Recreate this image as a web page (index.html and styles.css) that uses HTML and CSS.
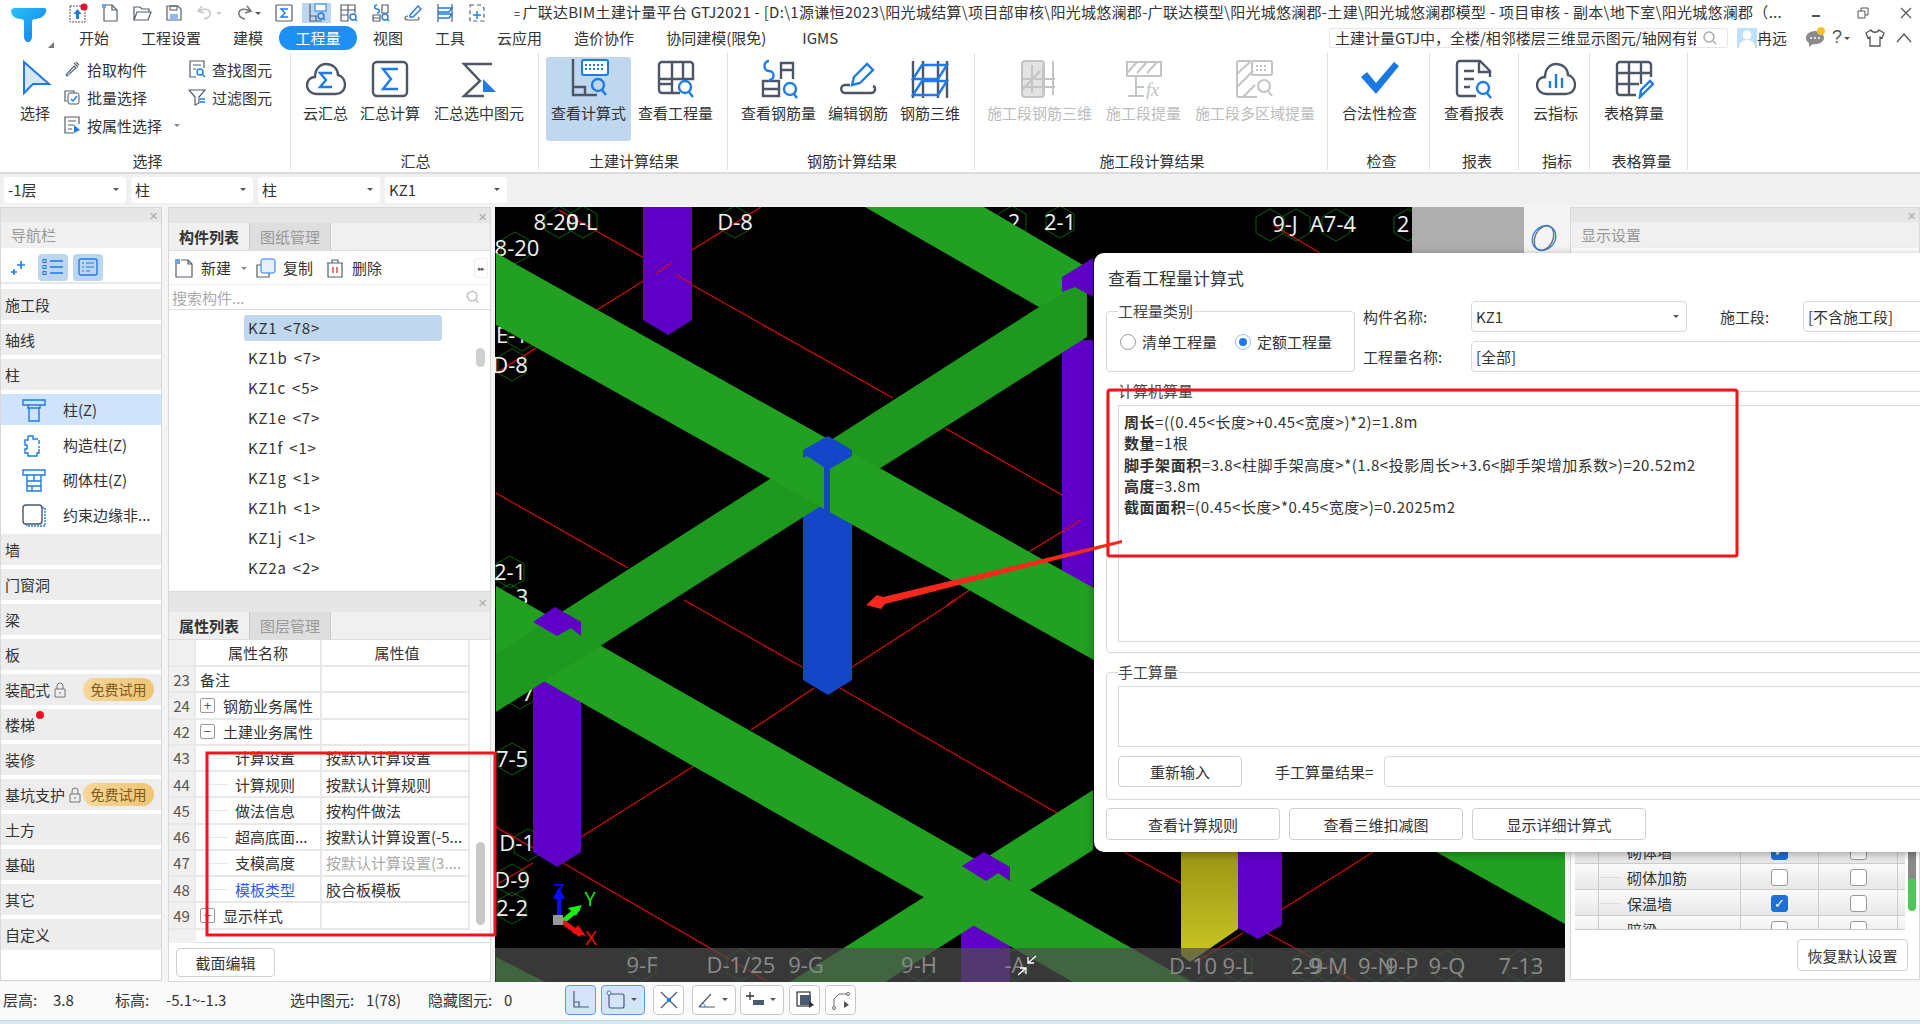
FILE: index.html
```html
<!DOCTYPE html>
<html lang="zh-CN">
<head>
<meta charset="utf-8">
<title>广联达BIM土建计量平台 GTJ2021</title>
<link rel="stylesheet" href="styles.css">
</head>
<body>
<header class="top">
  <div class="logo-col">
    <svg class="logo" viewBox="0 0 40 40" width="40" height="40">
      <defs><linearGradient id="lg" x1="0" y1="0" x2="1" y2="1"><stop offset="0" stop-color="#27c4f5"/><stop offset="1" stop-color="#1478f0"/></linearGradient></defs>
      <path fill="url(#lg)" d="M2 6c0-2 2-3 4-3h29c2 0 3 2 2 4-2 5-7 7-11 7-2 0-3 1-3 3v14c0 4-2 6-4 6s-4-2-4-5V17c0-2-1-3-3-3C7 14 2 11 2 6z"/>
    </svg>
    <span class="logo-corner"></span>
  </div>
  <div class="top-main">
    <div class="title-row">
      <div class="qa">
        <span class="qi"><svg viewBox="0 0 20 20" width="20" height="20"><rect x="2" y="3" width="15" height="16" fill="none" stroke="#555" stroke-dasharray="2 1"/><path d="M9.5 6l-4 5h2.5v5h3v-5h2.5z" fill="#1e7be6"/><circle cx="16" cy="4" r="3.6" fill="#e8102a"/></svg></span>
        <span class="qi"><svg viewBox="0 0 20 20" width="20" height="20"><path class="sl1" d="M4 2h8l5 5v11H4z"/><path class="sl1" d="M12 2v5h5"/><rect x="2" y="1" width="4" height="4" fill="#6ea4ea"/></svg></span>
        <span class="qi"><svg viewBox="0 0 20 20" width="20" height="20"><path class="sl1" d="M2 17V4h6l2 2h7v3M2 17l3-8h14l-3 8z"/></svg></span>
        <span class="qi"><svg viewBox="0 0 20 20" width="20" height="20"><path class="sl1" d="M3 3h11l3 3v11H3z"/><rect x="6" y="11" width="8" height="6" fill="#8eb8ee"/><rect x="6" y="3" width="7" height="4" fill="none" stroke="#555"/></svg></span>
        <span class="qi qw"><svg viewBox="0 0 32 20" width="32" height="20"><path fill="none" stroke="#c8c8c8" stroke-width="1.6" d="M10 16c5-1 7-4 6-7s-6-4-11-1M8 3L4 8l6 2"/><path fill="#c8c8c8" d="M22 9h6l-3 3z"/></svg></span>
        <span class="qi qw"><svg viewBox="0 0 32 20" width="32" height="20"><path fill="none" stroke="#777" stroke-width="1.6" d="M12 16c-5-1-7-4-6-7s6-4 11-1M14 3l4 5-6 2"/><path fill="#555" d="M22 9h6l-3 3z"/></svg></span>
        <span class="qi"><svg viewBox="0 0 20 20" width="20" height="20"><rect x="2" y="2" width="16" height="16" rx="1" class="sl1"/><path class="bl1" d="M14 6H7l4 4-4 4h7"/></svg></span>
        <span class="qi qi-on"><svg viewBox="0 0 20 20" width="20" height="20"><path class="sl1" d="M3 1v17h12M3 13h6v5"/><rect x="8" y="1" width="11" height="7" fill="#fff" stroke="#1e7be6"/><circle cx="14" cy="13" r="3" class="bl1"/><path class="bl1" d="M16 15l2 2"/></svg></span>
        <span class="qi"><svg viewBox="0 0 20 20" width="20" height="20"><path class="sl1" d="M2 12V2h14v8M2 7h14M9 2v16M2 12h7v6H2z"/><circle cx="14" cy="14" r="3" class="bl1"/><path class="bl1" d="M16 16l2 2"/></svg></span>
        <span class="qi"><svg viewBox="0 0 20 20" width="20" height="20"><path class="sl1" d="M11 2h6v8h-6zM2 12h7v6H2zM2 15h7"/><path class="bl1" d="M6 2C3 2 3 6 6 6s3 4 0 4"/><circle cx="14" cy="14" r="3" class="bl1"/><path class="bl1" d="M16 16l2 2"/></svg></span>
        <span class="qi"><svg viewBox="0 0 20 20" width="20" height="20"><path class="bl1" d="M7 12L15 3l3 3-8 8-3 0z"/><path class="sl1" d="M5 13c-4 0-4 4 0 4h9c2 0 3-2 1-3"/></svg></span>
        <span class="qi"><svg viewBox="0 0 20 20" width="20" height="20"><path class="sl1" d="M3 1v18M17 1v18"/><path class="bl1" d="M3 5h14l-3 4H3M3 11h14l-3 4H3"/></svg></span>
        <span class="qi"><svg viewBox="0 0 20 20" width="20" height="20"><path class="sl1" d="M3 2h11l3 3v13H3z" stroke-dasharray="4 3"/><path class="bl1" d="M10 8v8M6 12h8"/></svg></span>
      </div>
      <div class="app-title"><span class="title-eq">=</span>广联达BIM土建计量平台 GTJ2021 - [D:\1源谦恒2023\阳光城结算\项目部审核\阳光城悠澜郡-广联达模型\阳光城悠澜郡-土建\阳光城悠澜郡模型 - 项目审核 - 副本\地下室\阳光城悠澜郡（...</div>
      <div class="win">
        <svg class="win-min" viewBox="0 0 12 12" width="12" height="12"><path d="M2 9h8" stroke="#555" stroke-width="2"/></svg>
        <svg class="win-max" viewBox="0 0 12 12" width="12" height="12"><path d="M1 4h7v7H1zM4 4V1h7v7H8" fill="none" stroke="#555"/></svg>
        <svg class="win-close" viewBox="0 0 12 12" width="12" height="12"><path d="M1 1l10 10M11 1L1 11" stroke="#555" stroke-width="1.2"/></svg>
      </div>
    </div>
    <div class="tab-row">
      <nav class="tabs">
        <span class="tab">开始</span><span class="tab">工程设置</span><span class="tab">建模</span><span class="tab tab-on">工程量</span><span class="tab">视图</span><span class="tab">工具</span><span class="tab">云应用</span><span class="tab">造价协作</span><span class="tab">协同建模(限免)</span><span class="tab tab-last">IGMS</span>
      </nav>
      <div class="top-tools">
        <div class="topsearch"><span class="topsearch-text">土建计量GTJ中，全楼/相邻楼层三维显示图元/轴网有错</span>
          <svg viewBox="0 0 16 16" width="16" height="16"><circle cx="7" cy="7" r="5" fill="none" stroke="#aaa" stroke-width="1.5"/><path d="M11 11l3 3" stroke="#aaa" stroke-width="1.5"/></svg>
        </div>
        <svg class="avatar" viewBox="0 0 20 20" width="20" height="20"><rect width="20" height="20" fill="#bfe0fa"/><circle cx="10" cy="7" r="4.5" fill="#fff"/><path d="M2 20c0-6 4-8 8-8s8 2 8 8z" fill="#fff"/></svg>
        <span class="uname">冉远</span>
        <svg class="chat" viewBox="0 0 22 22" width="22" height="22"><path d="M11 4c-5 0-9 3-9 7 0 2 1 4 3 5v4l4-3c5 1 11-2 11-6 0-4-4-7-9-7z" fill="#8a8a8a"/><circle cx="7" cy="11" r="1" fill="#fff"/><circle cx="11" cy="11" r="1" fill="#fff"/><circle cx="15" cy="11" r="1" fill="#fff"/><circle cx="17" cy="4" r="4" fill="#f6c22c"/></svg>
        <span class="help">?</span><span class="help-arrow"></span>
        <svg class="shirt" viewBox="0 0 20 20" width="20" height="20"><path d="M6 2L1 5l2 5 2-1v9h10V9l2 1 2-5-5-3c-1 3-7 3-8 0z" fill="none" stroke="#555" stroke-width="1.3"/></svg>
        <svg class="chev" viewBox="0 0 18 12" width="18" height="12"><path d="M2 10l7-8 7 8" fill="none" stroke="#555" stroke-width="1.4"/></svg>
      </div>
    </div>
  </div>
</header>

<section class="ribbon">
  <div class="rg rg1">
    <div class="rg-body sel-body">
      <div class="rb rb-sel"><svg viewBox="0 0 40 40" width="40" height="40"><path d="M9 3l25 22H18L9 34z" fill="#d6e7fb" stroke="#1e7be6" stroke-width="2"/></svg><span>选择</span></div>
      <div class="sel-col sel-a">
        <div class="sm"><svg viewBox="0 0 18 18" width="18" height="18"><path class="sl1" d="M3 15l8-9 2 2-9 8zM11 3l4 4"/><path class="sl1" d="M13 2l3 3"/><path d="M2 16l4-4 1 2z" fill="#8db6ea"/></svg><span>拾取构件</span></div>
        <div class="sm"><svg viewBox="0 0 18 18" width="18" height="18"><path class="sl1" d="M4 13H2V3h9v2"/><rect x="5" y="5" width="11" height="11" rx="2" fill="none" stroke="#4d5666"/><path class="bl1" d="M8 11l2 2 4-5"/></svg><span>批量选择</span></div>
        <div class="sm"><svg viewBox="0 0 18 18" width="18" height="18"><path class="sl1" d="M16 8V1H2v16h9M5 5h8M5 9h6M5 13h4"/><path class="bf" d="M11 9l6 5-6 3z"/></svg><span>按属性选择</span><i class="caret"></i></div>
      </div>
      <div class="sel-col sel-b">
        <div class="sm"><svg viewBox="0 0 18 18" width="18" height="18"><path class="sl1" d="M16 8V1H2v16h6M5 5h8M5 9h3"/><circle cx="12" cy="12" r="3" class="bl1"/><path class="bl1" d="M14 14l3 3"/></svg><span>查找图元</span></div>
        <div class="sm"><svg viewBox="0 0 18 18" width="18" height="18"><path class="sl1" d="M1 2h16l-6 7v6l-4 2V9z"/><path class="bl1" d="M12 11h5M12 14h5"/></svg><span>过滤图元</span></div>
      </div>
    </div>
    <div class="rg-label">选择</div>
  </div>
  <div class="rg rg2">
    <div class="rg-body">
      <div class="rb"><svg viewBox="0 0 40 40" width="40" height="40"><path class="sl" d="M11 35C4 35 1 30 1 26c0-5 4-8 8-8C9 10 14 5 20 5c7 0 12 5 12 11 4 1 7 5 7 10 0 5-4 9-9 9z"/><path class="bl" d="M26 14H14l6 7-6 7h12"/></svg><span>云汇总</span></div>
      <div class="rb"><svg viewBox="0 0 40 40" width="40" height="40"><rect x="3" y="3" width="34" height="34" rx="4" class="sl"/><path class="bl" d="M28 10H13l8 10-8 10h15"/></svg><span>汇总计算</span></div>
      <div class="rb rb-wide"><svg viewBox="0 0 40 40" width="40" height="40"><path class="sl" d="M33 5H5l16 17L5 37h20"/><path class="bf" d="M24 20l13 13H24z"/></svg><span>汇总选中图元</span></div>
    </div>
    <div class="rg-label">汇总</div>
  </div>
  <div class="rg rg3">
    <div class="rg-body">
      <div class="rb rb-on"><svg viewBox="0 0 40 40" width="40" height="40"><path class="sl" d="M4 0v36h24M4 28h12v8"/><rect x="13" y="1" width="26" height="15" rx="2" fill="#fff" stroke="#1e7be6" stroke-width="2"/><path d="M16 6h20M16 10h20" stroke="#1e7be6" stroke-width="2" stroke-dasharray="2 2"/><circle cx="29" cy="26" r="6" class="bl"/><path class="bl" d="M33 31l4 5"/></svg><span>查看计算式</span></div>
      <div class="rb"><svg viewBox="0 0 40 40" width="40" height="40"><path class="sl" d="M24 34H6a3 3 0 0 1-3-3V6a3 3 0 0 1 3-3h28a3 3 0 0 1 3 3v14H3M16 3v31M3 25h13M27 3v17"/><circle cx="29" cy="28" r="6" class="bl"/><path class="bl" d="M33 33l4 5"/></svg><span>查看工程量</span></div>
    </div>
    <div class="rg-label">土建计算结果</div>
  </div>
  <div class="rg rg4">
    <div class="rg-body">
      <div class="rb"><svg viewBox="0 0 40 40" width="40" height="40"><path class="sl" d="M22 20V4h12v16M22 11h12M4 37V22h16v15zM4 30h16"/><path class="bl" d="M10 2C4 2 4 12 10 12s6 9 0 9"/><circle cx="31" cy="30" r="6" class="bl"/><path class="bl" d="M35 35l3 4"/></svg><span>查看钢筋量</span></div>
      <div class="rb"><svg viewBox="0 0 40 40" width="40" height="40"><path class="bl" d="M14 26l2-8L29 5l6 6-13 13z"/><path class="sl" d="M12 26H7c-5 0-5 8 0 8h26c5 0 5-6 2-7"/></svg><span>编辑钢筋</span></div>
      <div class="rb"><svg viewBox="0 0 40 40" width="40" height="40"><path class="sl" d="M3 2v37M13 2v37M28 2v37M37 2v37"/><path class="bl" d="M3 20L12 6h25l-9 14zM3 36l9-14h25l-9 14z"/></svg><span>钢筋三维</span></div>
    </div>
    <div class="rg-label">钢筋计算结果</div>
  </div>
  <div class="rg rg5">
    <div class="rg-body">
      <div class="rb rb-off"><svg viewBox="0 0 40 40" width="40" height="40"><rect x="2" y="2" width="22" height="36" rx="3" fill="#e2e2e2" stroke="#c4c4c4" stroke-width="2"/><path class="gy" d="M3 30L20 12M12 6v28M23 6v28M33 2v34M3 20h32M3 28h32"/></svg><span>施工段钢筋三维</span></div>
      <div class="rb rb-off"><svg viewBox="0 0 40 40" width="40" height="40"><path class="gy" d="M3 3h34v14H3zM3 14L13 3M13 14L23 3M23 14L33 3M12 17v20M4 37h16M12 28h8"/><text x="22" y="37" class="fx">fx</text></svg><span>施工段提量</span></div>
      <div class="rb rb-off"><svg viewBox="0 0 40 40" width="40" height="40"><path class="gy" d="M16 2H4a2 2 0 0 0-2 2v32a2 2 0 0 0 2 2h18M2 15L15 3M2 28l16-16M8 38l12-12"/><rect x="17" y="2" width="20" height="14" rx="1" class="gy"/><path d="M21 7h12M21 11h12" stroke="#c4c4c4" stroke-width="2" stroke-dasharray="2 2"/><circle cx="29" cy="27" r="6" class="gy"/><path class="gy" d="M33 32l4 5"/></svg><span>施工段多区域提量</span></div>
    </div>
    <div class="rg-label">施工段计算结果</div>
  </div>
  <div class="rg rg6">
    <div class="rg-body">
      <div class="rb"><svg viewBox="0 0 40 40" width="40" height="40"><path d="M1 18l6-5 9 11L34 3l5 4-23 28z" fill="#1a78e2"/></svg><span>合法性检查</span></div>
    </div>
    <div class="rg-label">检查</div>
  </div>
  <div class="rg rg7">
    <div class="rg-body">
      <div class="rb"><svg viewBox="0 0 40 40" width="40" height="40"><path class="sl" d="M22 37H6a3 3 0 0 1-3-3V5a3 3 0 0 1 3-3h20l10 10v6M25 2v11h11M10 12h10M10 20h10M10 28h6"/><circle cx="29" cy="29" r="6" class="bl"/><path class="bl" d="M33 34l4 5"/></svg><span>查看报表</span></div>
    </div>
    <div class="rg-label">报表</div>
  </div>
  <div class="rg rg8">
    <div class="rg-body">
      <div class="rb"><svg viewBox="0 0 40 40" width="40" height="40"><path class="sl" d="M11 35C4 35 1 30 1 26c0-5 4-8 8-8C9 10 14 5 20 5c7 0 12 5 12 11 4 1 7 5 7 10 0 5-4 9-9 9z"/><path class="bl" d="M14 29V22M20 29V15M26 29V19"/></svg><span>云指标</span></div>
    </div>
    <div class="rg-label">指标</div>
  </div>
  <div class="rg rg9">
    <div class="rg-body">
      <div class="rb"><svg viewBox="0 0 40 40" width="40" height="40"><path class="sl" d="M22 36H6a3 3 0 0 1-3-3V6a3 3 0 0 1 3-3h28a3 3 0 0 1 3 3v12M3 14h34M3 25h22M15 3v33M27 3v22"/><path class="bl" d="M26 38l1-7 9-9 3 3-9 9z"/></svg><span>表格算量</span></div>
    </div>
    <div class="rg-label">表格算量</div>
  </div>
</section>

<section class="selectors">
  <div class="dd">-1层<i class="caret-d"></i></div>
  <div class="dd">柱<i class="caret-d"></i></div>
  <div class="dd">柱<i class="caret-d"></i></div>
  <div class="dd">KZ1<i class="caret-d"></i></div>
</section>

<main class="main">
  <aside class="nav panel">
    <div class="strip"><span class="x">×</span></div>
    <div class="panel-head">导航栏</div>
    <div class="nav-tools">
      <svg class="nt-spark" viewBox="0 0 18 18" width="18" height="18"><path d="M12 3v8M8 7h8M5 11v6M2 14h6" stroke="#1e7be6" stroke-width="1.6"/></svg>
      <span class="nt nt-on"><svg viewBox="0 0 22 18" width="22" height="18"><path d="M8 3h13M8 9h13M8 15h13" stroke="#1e7be6" stroke-width="1.4"/><rect x="1" y="1.500" width="3" height="3" fill="none" stroke="#1e7be6"/><rect x="1" y="7.500" width="3" height="3" fill="none" stroke="#1e7be6"/><rect x="1" y="13.500" width="3" height="3" fill="none" stroke="#1e7be6"/></svg></span>
      <span class="nt nt-on"><svg viewBox="0 0 20 18" width="20" height="18"><rect x="1" y="1" width="18" height="16" rx="2" fill="none" stroke="#1e7be6" stroke-width="1.4"/><path d="M4 5h2M8 5h8M4 9h2M8 9h8M4 13h2M8 13h4" stroke="#1e7be6"/></svg></span>
    </div>
    <ul class="nav-list">
      <li class="ni">施工段</li>
      <li class="ni">轴线</li>
      <li class="ni">柱</li>
      <li class="si si-on"><svg viewBox="0 0 24 24" width="24" height="24"><path class="bl1" d="M1 2h22v5H1zM6 7h12v3H6zM7 10h10v13H7z"/></svg><span>柱(Z)</span></li>
      <li class="si"><svg viewBox="0 0 24 24" width="24" height="24"><path class="bl1" d="M6 3h5v3h5M6 3v4H3v5h2v4H3v4h3v3h9v-3h2v-4M17 7v4M17 13v2"/></svg><span>构造柱(Z)</span></li>
      <li class="si"><svg viewBox="0 0 24 24" width="24" height="24"><path class="bl1" d="M1 2h22v5H1zM5 7h14v16H5zM5 13h14M5 18h14M12 7v6M10 18v5"/></svg><span>砌体柱(Z)</span></li>
      <li class="si si-last"><svg viewBox="0 0 24 24" width="24" height="24"><rect x="1" y="2" width="19" height="19" rx="3" fill="none" stroke="#4d5666" stroke-width="1.4"/><path class="bl1" d="M20 5h3v18H5v-2" stroke-dasharray="2 1"/></svg><span>约束边缘非...</span></li>
      <li class="ni">墙</li>
      <li class="ni">门窗洞</li>
      <li class="ni">梁</li>
      <li class="ni">板</li>
      <li class="ni ni-lock"><span>装配式</span><svg class="lock" viewBox="0 0 14 16" width="14" height="16"><path d="M2 7h10v8H2zM4 7V4a3 3 0 0 1 6 0v3M7 10v2" fill="none" stroke="#777"/></svg><b class="free">免费试用</b></li>
      <li class="ni">楼梯<i class="dot"></i></li>
      <li class="ni">装修</li>
      <li class="ni ni-lock"><span>基坑支护</span><svg class="lock" viewBox="0 0 14 16" width="14" height="16"><path d="M2 7h10v8H2zM4 7V4a3 3 0 0 1 6 0v3M7 10v2" fill="none" stroke="#777"/></svg><b class="free free-near">免费试用</b></li>
      <li class="ni">土方</li>
      <li class="ni">基础</li>
      <li class="ni">其它</li>
      <li class="ni">自定义</li>
    </ul>
  </aside>

  <div class="mid">
    <section class="panel cl">
      <div class="strip"><span class="x">×</span></div>
      <div class="ptabs"><span class="ptab ptab-on">构件列表</span><span class="ptab">图纸管理</span></div>
      <div class="cl-tools">
        <span class="ct"><svg viewBox="0 0 20 20" width="20" height="20"><path class="sl1" d="M2 4v15h16V6l-4-4H7M14 2v4h4"/><rect x="1" y="1" width="5" height="5" fill="#6ea4ea"/></svg>新建<i class="caret"></i></span>
        <span class="ct"><svg viewBox="0 0 20 20" width="20" height="20"><path class="sl1" d="M5 7H1v12h12v-4"/><rect x="5" y="1" width="14" height="14" rx="2" fill="#e6f0fc" stroke="#1e7be6"/></svg>复制</span>
        <span class="ct"><svg viewBox="0 0 20 20" width="20" height="20"><path class="sl1" d="M2 5h16M7 5V2h6v3M3 5v14h14V5"/><path d="M8 9v6M12 9v6" stroke="#e02020" stroke-width="1.2"/></svg>删除</span>
        <span class="ct-more">▸▸</span>
      </div>
      <div class="cl-search"><span>搜索构件...</span><svg viewBox="0 0 16 16" width="14" height="14"><circle cx="7" cy="7" r="5.500" fill="none" stroke="#bbb" stroke-width="1.500"/><path d="M11 11l3 3" stroke="#bbb" stroke-width="1.500"/></svg></div>
      <ul class="cl-list">
        <li class="kz kz-on">KZ1 &lt;78&gt;</li>
        <li class="kz">KZ1b &lt;7&gt;</li>
        <li class="kz">KZ1c &lt;5&gt;</li>
        <li class="kz">KZ1e &lt;7&gt;</li>
        <li class="kz">KZ1f &lt;1&gt;</li>
        <li class="kz">KZ1g &lt;1&gt;</li>
        <li class="kz">KZ1h &lt;1&gt;</li>
        <li class="kz">KZ1j &lt;1&gt;</li>
        <li class="kz">KZ2a &lt;2&gt;</li>
        <span class="sb sb-kz"></span>
      </ul>
    </section>
    <section class="panel pl">
      <div class="strip strip-tall"><span class="x">×</span></div>
      <div class="ptabs"><span class="ptab ptab-on">属性列表</span><span class="ptab">图层管理</span></div>
      <div class="ptable">
        <div class="pr pr-h"><span class="n"></span><span class="pn pn-c">属性名称</span><span class="pv pn-c">属性值</span></div>
        <div class="pr"><span class="n">23</span><span class="pn">备注</span><span class="pv"></span></div>
        <div class="pr"><span class="n">24</span><span class="pn"><i class="ex">+</i>钢筋业务属性</span><span class="pv"></span></div>
        <div class="pr"><span class="n">42</span><span class="pn"><i class="ex">−</i>土建业务属性</span><span class="pv"></span></div>
        <div class="pr"><span class="n">43</span><span class="pn pc">计算设置</span><span class="pv">按默认计算设置</span></div>
        <div class="pr"><span class="n">44</span><span class="pn pc">计算规则</span><span class="pv">按默认计算规则</span></div>
        <div class="pr"><span class="n">45</span><span class="pn pc">做法信息</span><span class="pv">按构件做法</span></div>
        <div class="pr"><span class="n">46</span><span class="pn pc">超高底面...</span><span class="pv">按默认计算设置(-5...</span></div>
        <div class="pr"><span class="n">47</span><span class="pn pc">支模高度</span><span class="pv pv-off">按默认计算设置(3....</span></div>
        <div class="pr"><span class="n">48</span><span class="pn pc pn-link">模板类型</span><span class="pv">胶合板模板</span></div>
        <div class="pr"><span class="n">49</span><span class="pn"><i class="ex">+</i>显示样式</span><span class="pv"></span></div>
        <div class="pr-end"><span class="n"></span></div>
        <span class="sb sb-pr"></span>
      </div>
      <div class="pl-foot"><button class="btn btn-sec">截面编辑</button></div>
    </section>
  </div>

  <div class="view">
    <svg class="scene" viewBox="495 207 1070 775" width="1070" height="775">
      <defs>
        <polygon id="hx" points="0,-16 14,-8 14,8 0,16 -14,8 -14,-8" fill="none" stroke="#0b5f0b" stroke-width="1"/>
        <linearGradient id="yl" x1="0" y1="0" x2="0" y2="1"><stop offset="0" stop-color="#9a9414"/><stop offset="1" stop-color="#ccc824"/></linearGradient>
      </defs>
      <rect x="495" y="207" width="1070" height="775" fill="#000"/>
      <g class="hexes">
        <use href="#hx" x="559" y="222"/><use href="#hx" x="583" y="222"/><use href="#hx" x="735" y="222"/><use href="#hx" x="1012" y="222"/><use href="#hx" x="1060" y="222"/>
        <use href="#hx" x="515" y="248"/><use href="#hx" x="522" y="335"/><use href="#hx" x="512" y="365"/><use href="#hx" x="510" y="572"/><use href="#hx" x="510" y="600"/>
        <use href="#hx" x="520" y="693"/><use href="#hx" x="512" y="759"/><use href="#hx" x="528" y="845"/><use href="#hx" x="512" y="880"/><use href="#hx" x="512" y="908"/>
        <use href="#hx" x="1270" y="225"/><use href="#hx" x="1296" y="225"/><use href="#hx" x="1336" y="225"/><use href="#hx" x="1408" y="225"/>
        <use href="#hx" x="642" y="965"/><use href="#hx" x="741" y="965"/><use href="#hx" x="806" y="965"/><use href="#hx" x="919" y="965"/><use href="#hx" x="1015" y="965"/>
        <use href="#hx" x="1193" y="966"/><use href="#hx" x="1238" y="966"/><use href="#hx" x="1307" y="966"/><use href="#hx" x="1328" y="966"/><use href="#hx" x="1376" y="966"/><use href="#hx" x="1402" y="966"/><use href="#hx" x="1447" y="966"/><use href="#hx" x="1521" y="966"/>
      </g>
      <g class="redl">
        <path d="M559 210L893 398M945 428L1062 495"/>
        <path d="M761 207L692 250M656 273L496 373"/>
        <path d="M496 493L628 568M684 600L804 668M840 688L1057 813"/>
        <path d="M1081 520L1027 553M956 600L852 667M814 688L751 730M694 766L581 837M533 863L496 885"/>
        <path d="M496 827L533 848M563 863L767 981"/>
        <path d="M1124 852L1181 883M1373 852L1281 910M1267 933L1355 981M1243 933L1196 962M1273 225L1320 253"/>
        <path d="M947 605L1000 570"/>
      </g>
      <g class="lbl">
        <text x="556" y="230">8-20</text><text x="582" y="230">9-L</text><text x="735" y="230">D-8</text><text x="1014" y="230">2</text><text x="1060" y="230">2-1</text>
        <text x="517" y="256">8-20</text><text x="512" y="343">E-1</text><text x="510" y="373">D-8</text><text x="510" y="580">2-1</text><text x="522" y="605">3</text><text x="528" y="701">7</text>
        <text x="512" y="767">7-5</text><text x="520" y="851">D-1,</text><text x="512" y="888">D-9</text><text x="512" y="916">2-2</text>
        <text x="1285" y="232">9-J</text><text x="1333" y="232">A7-4</text><text x="1403" y="232">2</text>
      </g>
      <path class="pu" d="M643 207H692V320L668 335L643 320Z"/>
      <path class="redl" d="M676 275L692 284M656 273L672 263"/>
      <path class="pu" d="M1062 340H1093V590H1062Z"/>
      <path class="redl" d="M1081 520L1062 532"/>
      <path class="pu" d="M533 640H581V852L557 867L533 852Z"/>
      <path class="pu" d="M961 900H1010V982H961Z"/>
      <path class="bu" d="M803 490H852V680L828 695L803 680Z"/>
      <path fill="url(#yl)" d="M1181 850H1238V929L1190 962L1181 955Z"/>
      <path class="pu" d="M1238 850H1282V925L1258 939L1238 928Z"/>
      <path class="gr" d="M1093 790L790 982H885L1093 850Z"/>
      <path class="gr" d="M496 586L1191 982H1073L496 654Z"/>
      <path class="gr" d="M496 957L545 982H496Z"/>
      <path class="gr" d="M865 207H984L1088 268V290L1039 307Z"/>
      <path class="gr2" d="M496 654L1039 307L1075 287L1087 293V337L496 712Z"/>
      <path class="gr" d="M496 253L1565 852V924L496 325Z"/>
      <path class="bu" d="M824 455H830V513H824Z"/>
      <path class="bu" d="M828 436L803 450V458L807 456L828 470L852 456V450Z"/>
      <path class="pu" d="M1093 258L1062 277V292L1075 287L1093 297Z"/>
      <path class="pu" d="M555 607L533 622L557 636L571 628L581 636V622Z"/>
      <path class="pu" d="M984 852L962 866L986 881L998 873L1010 881V867Z"/>
      <g class="gizmo">
        <path d="M559 890v30" stroke="#0a0aff" stroke-width="4"/><path d="M559 887l-6 12h12z" fill="#0a0aff"/>
        <text x="559" y="898" class="ax ax-z">Z</text>
        <path d="M562 922l17-14" stroke="#18ee18" stroke-width="5"/><path d="M582 905l-14 3 8 8z" fill="#18ee18"/>
        <text x="590" y="906" class="ax ax-y">Y</text>
        <path d="M563 922l18 13" stroke="#ee1010" stroke-width="5"/><path d="M586 936l-14-3 6-8z" fill="#ee1010"/>
        <text x="591" y="945" class="ax ax-x">X</text>
        <rect x="553" y="915" width="10" height="10" fill="#999"/>
      </g>
      <rect class="strip3d" x="495" y="948" width="1070" height="34"/>
      <g class="lbl lbl-dim">
        <text x="642" y="973">9-F</text><text x="741" y="973">D-1/25</text><text x="806" y="973">9-G</text><text x="919" y="973">9-H</text><text x="1015" y="973">-A</text>
        <text x="1193" y="974">D-10</text><text x="1238" y="974">9-L</text><text x="1307" y="974">2-9</text><text x="1328" y="974">9-M</text><text x="1376" y="974">9-N</text><text x="1402" y="974">9-P</text><text x="1447" y="974">9-Q</text><text x="1521" y="974">7-13</text>
      </g>
      <path d="M1036 956l-8 7M1028 957v6h6M1018 975l8-7M1026 974v-6h-6" fill="none" stroke="#fff" stroke-width="1.300"/>
      <rect x="1412" y="207" width="112" height="46" fill="#aeaeae"/>
      <rect x="1524" y="207" width="41" height="46" fill="#f4f4f4"/>
      <ellipse cx="1544" cy="238" rx="9" ry="13" fill="none" stroke="#777" stroke-width="1.600" transform="rotate(25 1544 238)"/>
      <ellipse cx="1544" cy="238" rx="11" ry="13" fill="none" stroke="#2a7ae2" stroke-width="1.200" transform="rotate(40 1544 238)"/>
    </svg>
  </div>

  <aside class="panel rp">
    <div class="strip"><span class="x">×</span></div>
    <div class="panel-head">显示设置</div>
    <div class="rp-body">
      <div class="rt">
        <div class="rr"><span></span><span class="rn">砌体墙</span><span class="rc"><i class="cb cb-on"></i></span><span class="rc"><i class="cb"></i></span></div>
        <div class="rr"><span></span><span class="rn">砌体加筋</span><span class="rc"><i class="cb"></i></span><span class="rc"><i class="cb"></i></span></div>
        <div class="rr"><span></span><span class="rn">保温墙</span><span class="rc"><i class="cb cb-on"></i></span><span class="rc"><i class="cb"></i></span></div>
        <div class="rr"><span></span><span class="rn">暗梁</span><span class="rc"><i class="cb"></i></span><span class="rc"><i class="cb"></i></span></div>
      </div>
      <span class="rsb"></span>
      <div class="rp-foot"><button class="btn btn-rs">恢复默认设置</button></div>
    </div>
  </aside>

  <section class="dlg">
    <div class="dlg-inner">
      <h2 class="dlg-title">查看工程量计算式</h2>
      <div class="dlg-top">
        <fieldset class="fs fs-type">
          <legend>工程量类别</legend>
          <div class="radios">
            <label class="rad"><i class="ro"></i>清单工程量</label>
            <label class="rad"><i class="ro ro-on"></i>定额工程量</label>
          </div>
        </fieldset>
        <div class="form">
          <span class="fl">构件名称:</span><div class="field f-name">KZ1<i class="caret-d"></i></div>
          <span class="fl fl-seg">施工段:</span><div class="field f-seg">[不含施工段]</div>
          <span class="fl">工程量名称:</span><div class="field f-all">[全部]</div>
        </div>
      </div>
      <fieldset class="fs fs-calc">
        <legend>计算机算量</legend>
        <div class="ta ta-calc">
          <p><b>周长</b>=((0.45&lt;长度&gt;+0.45&lt;宽度&gt;)*2)=1.8m</p>
          <p><b>数量</b>=1根</p>
          <p><b>脚手架面积</b>=3.8&lt;柱脚手架高度&gt;*(1.8&lt;投影周长&gt;+3.6&lt;脚手架增加系数&gt;)=20.52m2</p>
          <p><b>高度</b>=3.8m</p>
          <p><b>截面面积</b>=(0.45&lt;长度&gt;*0.45&lt;宽度&gt;)=0.2025m2</p>
        </div>
      </fieldset>
      <fieldset class="fs fs-man">
        <legend>手工算量</legend>
        <div class="ta ta-man"></div>
        <div class="man-row">
          <button class="btn btn-re">重新输入</button>
          <span class="man-l">手工算量结果=</span>
          <div class="field f-res"></div>
        </div>
      </fieldset>
      <div class="dlg-btns">
        <button class="btn btn-d">查看计算规则</button>
        <button class="btn btn-d">查看三维扣减图</button>
        <button class="btn btn-d">显示详细计算式</button>
      </div>
    </div>
  </section>
</main>

<footer class="status">
  <span class="st st-a">层高:</span><span class="st st-b">3.8</span>
  <span class="st st-c">标高:</span><span class="st st-d">-5.1~-1.3</span>
  <span class="st st-e">选中图元:</span><span class="st st-f">1(78)</span>
  <span class="st st-g">隐藏图元:</span><span class="st st-h">0</span>
  <div class="snap">
    <span class="sn sn-on"><svg viewBox="0 0 20 20" width="20" height="20"><path d="M3 1v16h15M3 12h5v5" fill="none" stroke="#4a5a70" stroke-width="1.200"/></svg></span>
    <span class="sn sn-on sn-w"><svg viewBox="0 0 20 20" width="20" height="20"><rect x="3" y="4" width="15" height="14" rx="2" fill="none" stroke="#4a5a70" stroke-width="1.200"/><circle cx="3" cy="3" r="2" fill="#fff" stroke="#1e7be6"/></svg><i class="caret-d"></i></span>
    <span class="sn"><svg viewBox="0 0 20 20" width="20" height="20"><path d="M2 2l16 16M18 2L2 18" stroke="#4a5a70" stroke-width="1.200"/><rect x="8" y="8" width="4" height="4" fill="#1e7be6"/></svg></span>
    <span class="sn sn-w"><svg viewBox="0 0 20 20" width="20" height="20"><path d="M2 17h16M2 17L14 4" fill="none" stroke="#4a5a70" stroke-width="1.200"/><path d="M8 17c0-2-1-3-2-4" fill="none" stroke="#1e7be6"/></svg><i class="caret-d"></i></span>
    <span class="sn sn-w"><svg viewBox="0 0 20 20" width="20" height="20"><path d="M5 2v8M1 6h8" stroke="#333" stroke-width="1.300"/><rect x="8" y="10" width="11" height="5" fill="#4a5a70"/></svg><i class="caret-d"></i></span>
    <span class="sn"><svg viewBox="0 0 20 20" width="20" height="20"><rect x="2" y="2" width="13" height="14" fill="none" stroke="#333" stroke-width="1.200"/><rect x="5" y="5" width="11" height="10" fill="#4a5a70"/><path d="M14 11l5 4-5 3z" fill="#333"/></svg></span>
    <span class="sn"><svg viewBox="0 0 20 20" width="20" height="20"><path d="M3 18V9l5-5h9" fill="none" stroke="#666"/><circle cx="3" cy="18" r="1.500" fill="#fff" stroke="#666"/><circle cx="17" cy="4" r="1.500" fill="#fff" stroke="#666"/><path d="M13 11l5 4-5 3z" fill="#555"/></svg></span>
  </div>
</footer>
<div class="base"></div>

<svg class="annot" viewBox="0 0 1920 1024" width="1920" height="1024">
  <rect x="1108" y="390" width="629" height="166" rx="2" class="annot-r"/>
  <rect x="207" y="753" width="288" height="182" class="annot-r"/>
  <path class="annot-a" d="M1122 540L883 597L877 595L866 605L881 609L885 604L1122 543Z"/>
</svg>
</body>
</html>
```

FILE: styles.css
```css
* { box-sizing: border-box; }
html, body { margin: 0; padding: 0; }
body {
  position: relative;
  width: 1920px; height: 1024px; overflow: hidden;
  background: #f4f4f4; color: #333;
  font-family: "Noto Sans CJK SC", "Noto Sans", sans-serif; font-size: 15px;
  display: flex; flex-direction: column;
}
ul { list-style: none; margin: 0; padding: 0; }
i { font-style: normal; }
p { margin: 0; }

.sl { fill: none; stroke: #4d5666; stroke-width: 2.4; }
.bl { fill: none; stroke: #1e7be6; stroke-width: 2.4; }
.bf { fill: #1e7be6; }
.gy { fill: none; stroke: #c4c4c4; stroke-width: 2; }
.fx { font: italic 18px "Liberation Serif", serif; fill: #c0c0c0; }
.sl1 { fill: none; stroke: #555d6b; stroke-width: 1.2; }
.bl1 { fill: none; stroke: #1e7be6; stroke-width: 1.4; }

/* top */
.top { display: flex; height: 50px; background: #fff; flex: none; }
.logo-col { width: 62px; position: relative; flex: none; padding: 5px 0 0 9px; }
.logo-corner { position: absolute; left: 48px; top: 42px; border: 3px solid transparent; border-right-color: #777; border-bottom-color: #777; }
.top-main { flex: 1; min-width: 0; }
.title-row { height: 25px; display: flex; align-items: center; }
.qa { display: flex; align-items: center; width: 452px; flex: none; }
.qi { width: 32px; height: 20px; display: flex; justify-content: center; }
.qw { width: 39px; justify-content: flex-start; padding-left: 4px; }
.qi-on { background: #bcd6f2; width: 29px; height: 20px; margin: 0 2px; }
.app-title { font-size: 15px; white-space: nowrap; color: #333; letter-spacing: .28px; padding-bottom: 2px; }
.title-eq { font-size: 11px; margin-right: 2px; }
.win { margin-left: auto; position: relative; width: 110px; height: 25px; display: flex; align-items: center; flex: none; }
.win-max { margin-left: 35px; }
.win-close { margin-left: 31px; }
.tab-row { height: 25px; display: flex; align-items: center; }
.tabs { display: flex; align-items: center; padding-left: 1px; }
.tab { padding: 0 16px; line-height: 24px; color: #333; white-space: nowrap; }
.tab-on { background: #1e90f5; color: #fff; border-radius: 12px; height: 24px; padding: 0 16.5px; }
.tab-last { margin-left: 4px; }
.top-tools { margin-left: auto; width: 591px; display: flex; align-items: center; flex: none; }
.topsearch { width: 399px; height: 20px; border: 1px solid #e6e6e6; border-radius: 2px; display: flex; align-items: center; padding-left: 5px; gap: 6px; }
.topsearch-text { width: 361px; overflow: hidden; white-space: nowrap; font-size: 15px; line-height: 20px; }
.avatar { margin-left: 9px; }
.uname { width: 30px; white-space: nowrap; }
.chat { margin-left: 17px; }
.help { margin-left: 6px; font-size: 18px; font-family: "Liberation Sans", sans-serif; color: #555; }
.help-arrow { width: 0; height: 0; border: 3px solid transparent; border-top-color: #555; margin: 4px 0 0 2px; }
.shirt { margin-left: 15px; }
.chev { margin-left: 10px; }

/* ribbon */
.ribbon { display: flex; height: 124px; background: #fff; padding-top: 3px; border-bottom: 2px solid #dcdcdc; flex: none; }
.rg { display: flex; flex-direction: column; height: 117px; border-right: 1px solid #e0e0e0; flex: none; }
.rg1 { width: 291px; } .rg2 { width: 248px; } .rg3 { width: 189px; } .rg4 { width: 247px; }
.rg5 { width: 353px; } .rg6 { width: 102px; } .rg7 { width: 89px; } .rg8 { width: 71px; } .rg9 { width: 98px; }
.rg-body { flex: 1; display: flex; gap: 2px; padding: 0 7px; }
.rg4 .rg-body { padding-left: 8px; }
.rg5 .rg-body { gap: 4px; }
.rg6 .rg-body, .rg7 .rg-body, .rg8 .rg-body, .rg9 .rg-body { padding-left: 9px; }
.rg-label { height: 19px; line-height: 19px; text-align: center; font-size: 15px; padding-left: 2px; }
.rg1 .rg-label { padding-left: 5px; }
.rg6 .rg-label, .rg7 .rg-label, .rg8 .rg-label, .rg9 .rg-label { padding-left: 6px; }
.rb { display: flex; flex-direction: column; align-items: center; padding: 6px 5px 0; height: 89px; white-space: nowrap; gap: 3px; border-radius: 3px; }
.rb span { line-height: 22px; }
.rb-on { background: #bfd7ef; height: 84px; margin-top: 4px; padding-top: 2px; }
.rb-wide { margin-left: 2px; }
.rb-off { color: #bcbcbc; }
.sel-body { padding: 0; gap: 0; position: relative; }
.rb-sel { width: 40px; margin-left: 15px; padding: 6px 0 0; flex: none; }
.sel-col { display: flex; flex-direction: column; padding-top: 2px; }
.sel-a { margin-left: 8px; width: 125px; }
.sm { display: flex; align-items: center; gap: 6px; height: 28px; white-space: nowrap; }
.caret { display: inline-block; width: 0; height: 0; border: 3.5px solid transparent; border-top-color: #888; margin: 4px 0 0 6px; }

/* selectors */
.selectors { height: 31px; background: #f0f0f0; display: flex; gap: 5px; padding: 3px 0 0 4px; flex: none; }
.dd { width: 122px; height: 26px; background: #fff; border-radius: 3px; padding-left: 4px; line-height: 26px; position: relative; }
.caret-d { position: absolute; right: 7px; top: 50%; margin-top: -2px; border: 3.5px solid transparent; border-top-color: #555; width: 0; height: 0; }

/* main */
.main { flex: 1; min-height: 0; position: relative; display: flex; padding-top: 2px; background: #f4f4f4; }
.panel { background: #fff; border: 1px solid #d8d8d8; display: flex; flex-direction: column; }
.strip { height: 14px; background: #e6e6e6; position: relative; flex: none; }
.strip-tall { height: 20px; }
.x { position: absolute; right: 3px; top: 50%; transform: translateY(-50%); color: #aaa; font: 15px/15px "Liberation Sans", sans-serif; }
.panel-head { height: 26px; background: #f0f0f0; color: #999; line-height: 25px; padding-left: 10px; flex: none; }

.nav { width: 162px; margin-bottom: 1px; }
.nav-tools { height: 36px; display: flex; align-items: center; padding: 4px 0 0 8px; border-bottom: 2px solid #e8e8e8; flex: none; }
.nt-spark { margin-right: 11px; }
.nt { width: 30px; height: 27px; border-radius: 4px; display: flex; align-items: center; justify-content: center; margin-right: 5px; }
.nt-on { background: #bcd6f2; }
.nav-list { padding-top: 5px; display: flex; flex-direction: column; }
.ni { height: 31px; margin-bottom: 4px; background: #ededed; line-height: 31px; padding-left: 4px; position: relative; display: flex; align-items: center; white-space: nowrap; }
.si { height: 35px; display: flex; align-items: center; padding-left: 21px; gap: 17px; white-space: nowrap; position: relative; }
.si-on { background: #cfe4fc; height: 31px; margin-bottom: 2px; }
.si-last { margin-bottom: 2px; }
.ni-lock { gap: 3px; }
.lock { flex: none; }
.free { position: absolute; left: 82px; top: 4px; width: 71px; height: 23px; border-radius: 12px; background: linear-gradient(90deg, #f6d69a, #efc572); color: #7d5a20; font-weight: 400; font-size: 14px; line-height: 23px; text-align: center; }
.dot { position: absolute; left: 35px; top: 2px; width: 8px; height: 8px; border-radius: 50%; background: #f01020; }

.mid { width: 323px; margin-left: 6px; display: flex; flex-direction: column; }
.cl { height: 385px; flex: none; }
.cl .strip { height: 15px; }
.pl { flex: 1; border-top: none; }
.ptabs { height: 28px; background: #f0f0f0; display: flex; border-bottom: 1px solid #ddd; flex: none; }
.ptab { width: 81px; text-align: center; line-height: 28px; color: #999; background: #dedede; border-right: 1px solid #ccc; }
.ptab-on { font-weight: 700; color: #333; background: #f0f0f0; }
.cl-tools { height: 34px; display: flex; align-items: center; padding-left: 5px; border-bottom: 1px solid #eee; position: relative; flex: none; }
.ct { display: flex; align-items: center; gap: 7px; margin-right: 6px; white-space: nowrap; }
.ct .caret { margin-left: 3px; }
.ct:nth-child(2) { margin-left: 3px; margin-right: 12px; }
.ct-more { margin-left: auto; margin-right: 2px; width: 14px; height: 20px; border: 1px solid #eee; border-radius: 3px; font-size: 7px; line-height: 18px; color: #555; text-align: center; letter-spacing: -1px; white-space: nowrap; }
.cl-search { height: 25px; display: flex; align-items: center; justify-content: space-between; padding: 0 10px 0 3px; color: #aaa; border-bottom: 1px solid #ddd; flex: none; }
.cl-list { flex: 1; position: relative; padding-top: 5px; min-height: 0; }
.kz { height: 26px; margin: 0 0 4px 75px; width: 198px; line-height: 26px; padding-left: 4px; font-size: 15px; letter-spacing: .8px; word-spacing: 2px; white-space: nowrap; border-radius: 3px; }
.kz-on { background: #bfd7ef; }
.sb { position: absolute; background: #c8c8c8; width: 9px; border-radius: 5px; right: 5px; }
.sb-kz { top: 38px; height: 19px; background: #d0d0d0; }
.sb-pr { top: 202px; height: 83px; }

.ptable { position: relative; height: 303px; border-bottom: 1px solid #ddd; flex: none; }
.pr { display: grid; grid-template-columns: 27px 126px 148px; height: 26.25px; border-bottom: 2px solid #e8e8e8; font-size: 15px; width: 301px; }
.pr-h { height: 27px; }
.pr > span { display: flex; align-items: center; white-space: nowrap; overflow: hidden; border-right: 2px solid #e8e8e8; }
.n { background: #f0f0f0; justify-content: center; color: #555; font-size: 15px; }
.pn { padding-left: 4px; }
.pn-c { justify-content: center; padding-left: 0; }
.pc { padding-left: 39px; position: relative; }
.pc::before { content: ""; position: absolute; left: 12px; top: 50%; width: 20px; border-top: 1px solid #e6e6e6; }
.pv { padding-left: 4px; }
.pv-off { color: #aaa; }
.pn-link { color: #2a5bf0; }
.ex { width: 15px; height: 15px; border: 1px solid #999; border-radius: 2px; display: inline-flex; align-items: center; justify-content: center; font: 13px/13px "Liberation Sans", sans-serif; margin: 0 8px 0 0; color: #555; flex: none; }
.pr-end { height: 13px; }
.pr-end .n { display: block; width: 27px; height: 13px; }
.pl-foot { padding: 5px 0 0 7px; }
.btn { font: inherit; color: #333; background: #fff; border: 1px solid #d0d0d0; border-radius: 4px; padding: 0; white-space: nowrap; }
.btn-sec { width: 99px; height: 29px; }

.view { width: 1070px; margin-left: 4px; position: relative; flex: none; height: 775px; overflow: hidden; }
.scene { display: block; }
.redl path, path.redl { fill: none; stroke: #d80a0a; stroke-width: 1.2; }
.pu { fill: #5f00c6; }
.bu { fill: #1446c8; }
.gr { fill: #21a021; }
.gr2 { fill: #1f9820; }
.lbl text { fill: #f0f0f0; font: 22px "Open Sans", "Liberation Sans", sans-serif; text-anchor: middle; }
.lbl-dim text { fill: #8a8a8a; }
.strip3d { fill: rgba(78, 78, 78, .72); }
.ax { font: 20px "Open Sans", sans-serif; text-anchor: middle; }
.ax-z { fill: #0a0aff; } .ax-y { fill: #18ee18; } .ax-x { fill: #ee1010; }

.rp { width: 350px; margin-left: 5px; height: 773px; flex: none; }
.rp-body { flex: 1; display: flex; flex-direction: column; justify-content: flex-end; position: relative; min-height: 0; }
.rt { margin: 0 14px 0 4px; height: 92px; overflow: hidden; border-bottom: 1px solid #ccc; }
.rr { display: grid; grid-template-columns: 24px 142px 78px 79px; height: 26px; border-bottom: 1px solid #ccc; background: linear-gradient(#fafafa, #e8e8e8); }
.rr > span { border-right: 1px solid #ccc; display: flex; align-items: center; height: 26px; }
.rn { padding-left: 28px; position: relative; white-space: nowrap; }
.rn::before { content: ""; position: absolute; left: 1px; width: 20px; top: 13px; border-top: 1px solid #ddd; }
.rc { justify-content: center; }
.cb { width: 17px; height: 17px; border: 1px solid #999; border-radius: 3px; background: #fff; display: block; }
.cb-on { background: #1e6fd6; border-color: #1e6fd6; position: relative; }
.cb-on::after { content: "✓"; color: #fff; font: 700 13px/15px "DejaVu Sans", sans-serif; position: absolute; left: 2px; top: 0; }
.rsb { position: absolute; right: 3px; bottom: 68px; width: 8px; height: 70px; border-radius: 4px; background: linear-gradient(#8a8a8a 55%, #4ec65a 55%); }
.rp-foot { height: 49px; padding: 9px 11px 0 0; display: flex; justify-content: flex-end; }
.btn-rs { width: 111px; height: 32px; }

/* dialog */
.dlg { position: absolute; left: 1094px; top: 48px; width: 826px; height: 599px; background: #fff; border-radius: 10px 0 0 10px; box-shadow: 0 2px 8px rgba(0,0,0,.35); overflow: hidden; }
.dlg-inner { width: 900px; padding-left: 12px; }
.dlg-title { margin: 0; height: 47px; font-size: 17px; font-weight: 400; line-height: 50px; padding-left: 2px; color: #333; }
.dlg-top { display: flex; gap: 8px; }
.fs { border: 1px solid #d8d8d8; border-radius: 4px; margin: 0; padding: 0 11px; min-width: 0; }
.fs legend { padding: 0; margin-left: 0; line-height: 22px; font-size: 15px; color: #444; }
.fs-type { width: 249px; height: 72px; flex: none; }
.radios { display: flex; gap: 18px; padding: 9px 0 0 2px; }
.rad { display: flex; align-items: center; gap: 6px; white-space: nowrap; font-size: 15px; }
.ro { width: 16px; height: 16px; border-radius: 50%; border: 1px solid #999; display: block; background: #fff; position: relative; flex: none; }
.ro-on { border-color: #9cc0ee; }
.ro-on::after { content: ""; position: absolute; left: 3px; top: 3px; width: 8px; height: 8px; border-radius: 50%; background: #1e7be6; }
.form { display: grid; flex: none; grid-template-columns: 108px 216px 116px 200px; grid-template-rows: 31px 31px; row-gap: 9px; align-items: center; padding-top: 1px; }
.fl { white-space: nowrap; }
.fl-seg { padding-left: 33px; }
.field { height: 31px; border: 1px solid #d8d8d8; border-radius: 4px; line-height: 29px; padding-left: 4px; position: relative; background: #fff; }
.f-all { grid-column: 2 / 5; }
.f-seg { width: 200px; }
.fs-calc { margin-top: 8px; height: 273px; width: 888px; }
.ta { border: 1px solid #d8d8d8; background: #fff; }
.ta-calc { height: 237px; margin-top: 3px; padding: 5px 5px; font-size: 15px; line-height: 21.25px; letter-spacing: .55px; }
.ta-calc p { white-space: nowrap; }
.ta-calc b { font-weight: 700; }
.fs-man { margin-top: 8px; height: 139px; width: 888px; }
.ta-man { height: 61px; margin-top: 3px; }
.man-row { display: flex; align-items: center; margin-top: 9px; }
.btn-re { width: 124px; height: 31px; }
.man-l { margin-left: 33px; width: 109px; white-space: nowrap; }
.f-res { flex: 1; }
.dlg-btns { display: flex; gap: 9px; margin-top: 8px; }
.btn-d { width: 174px; height: 32px; }

/* status */
.status { height: 38px; background: #fafafa; display: flex; align-items: center; flex: none; position: relative; padding-bottom: 3px; }
.st { white-space: nowrap; }
.st-a { margin-left: 3px; width: 50px; }
.st-b { width: 62px; }
.st-c { width: 51px; }
.st-d { width: 124px; }
.st-e { width: 76px; }
.st-f { width: 62px; }
.st-g { width: 76px; }
.st-h { width: 61px; }
.snap { display: flex; gap: 5px; }
.sn { width: 31px; height: 30px; border: 1px solid #c8c8c8; border-radius: 4px; display: flex; align-items: center; justify-content: center; position: relative; background: #fff; }
.sn:nth-child(3), .sn:nth-child(4) { margin-left: 3px; }
.sn:nth-child(5) { margin-left: -1px; }
.sn-on { background: #d4e5fa; border-color: #5a9be8; }
.sn-w { width: 44px; justify-content: flex-start; padding-left: 4px; }
.base { height: 4px; background: #d4e8f0; border-top: 1px solid #c4d8e0; flex: none; }

.annot { position: absolute; left: 0; top: 0; pointer-events: none; }
.annot-r { fill: none; stroke: #f2141a; stroke-width: 3; }
.annot-a { fill: #f5281e; }
```
